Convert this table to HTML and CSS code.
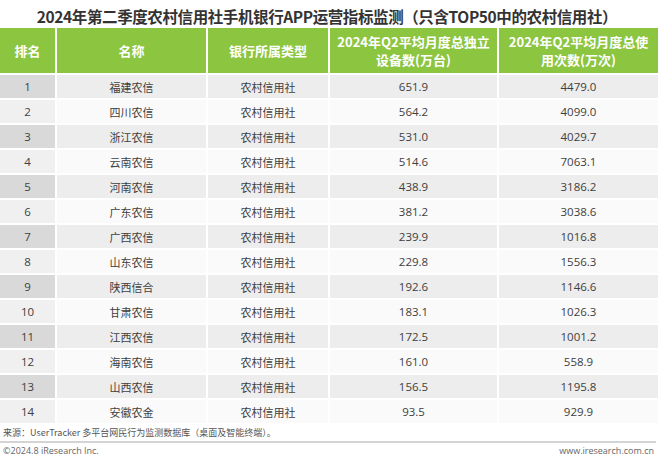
FILE: index.html
```html
<!DOCTYPE html>
<html lang="zh-CN">
<head>
<meta charset="utf-8">
<title>2024年第二季度农村信用社手机银行APP运营指标监测</title>
<link rel="stylesheet" href="styles.css">
</head>
<body>
<div class="page">
  <h1 class="title">2024年第二季度农村信用社手机银行APP运营指标监测（只含TOP50中的农村信用社）</h1>
  <div class="table">
    <div class="row head">
      <div class="cell">排名</div>
      <div class="cell">名称</div>
      <div class="cell">银行所属类型</div>
      <div class="cell">2024年Q2平均月度总独立<br>设备数(万台)</div>
      <div class="cell">2024年Q2平均月度总使<br>用次数(万次)</div>
    </div>
    <div class="row odd"><div class="cell rank">1</div><div class="cell">福建农信</div><div class="cell">农村信用社</div><div class="cell num">651.9</div><div class="cell num">4479.0</div></div>
    <div class="row even"><div class="cell rank">2</div><div class="cell">四川农信</div><div class="cell">农村信用社</div><div class="cell num">564.2</div><div class="cell num">4099.0</div></div>
    <div class="row odd"><div class="cell rank">3</div><div class="cell">浙江农信</div><div class="cell">农村信用社</div><div class="cell num">531.0</div><div class="cell num">4029.7</div></div>
    <div class="row even"><div class="cell rank">4</div><div class="cell">云南农信</div><div class="cell">农村信用社</div><div class="cell num">514.6</div><div class="cell num">7063.1</div></div>
    <div class="row odd"><div class="cell rank">5</div><div class="cell">河南农信</div><div class="cell">农村信用社</div><div class="cell num">438.9</div><div class="cell num">3186.2</div></div>
    <div class="row even"><div class="cell rank">6</div><div class="cell">广东农信</div><div class="cell">农村信用社</div><div class="cell num">381.2</div><div class="cell num">3038.6</div></div>
    <div class="row odd"><div class="cell rank">7</div><div class="cell">广西农信</div><div class="cell">农村信用社</div><div class="cell num">239.9</div><div class="cell num">1016.8</div></div>
    <div class="row even"><div class="cell rank">8</div><div class="cell">山东农信</div><div class="cell">农村信用社</div><div class="cell num">229.8</div><div class="cell num">1556.3</div></div>
    <div class="row odd"><div class="cell rank">9</div><div class="cell">陕西信合</div><div class="cell">农村信用社</div><div class="cell num">192.6</div><div class="cell num">1146.6</div></div>
    <div class="row even"><div class="cell rank">10</div><div class="cell">甘肃农信</div><div class="cell">农村信用社</div><div class="cell num">183.1</div><div class="cell num">1026.3</div></div>
    <div class="row odd"><div class="cell rank">11</div><div class="cell">江西农信</div><div class="cell">农村信用社</div><div class="cell num">172.5</div><div class="cell num">1001.2</div></div>
    <div class="row even"><div class="cell rank">12</div><div class="cell">海南农信</div><div class="cell">农村信用社</div><div class="cell num">161.0</div><div class="cell num">558.9</div></div>
    <div class="row odd"><div class="cell rank">13</div><div class="cell">山西农信</div><div class="cell">农村信用社</div><div class="cell num">156.5</div><div class="cell num">1195.8</div></div>
    <div class="row even"><div class="cell rank">14</div><div class="cell">安徽农金</div><div class="cell">农村信用社</div><div class="cell num">93.5</div><div class="cell num">929.9</div></div>
  </div>
  <p class="source">来源：UserTracker 多平台网民行为监测数据库（桌面及智能终端）。</p>
  <div class="footer">
    <span class="copy">©2024.8 iResearch Inc.</span>
    <span class="site">www.iresearch.com.cn</span>
  </div>
</div>
</body>
</html>
```

FILE: styles.css
```css
* { box-sizing: border-box; }
html, body { margin: 0; padding: 0; background: #ffffff; }
body {
  font-family: "Noto Sans", "Noto Sans CJK SC", sans-serif;
  color: #404040;
  width: 660px;
  height: 467px;
  overflow: hidden;
}
.page { padding-top: 5px; }
.title {
  margin: 0;
  height: 23px;
  font-size: 15.5px;
  line-height: 23px;
  font-weight: 700;
  color: #333333;
  text-align: center;
  font-family: "Noto Sans CJK SC", sans-serif;
  letter-spacing: -0.4px;
  padding-right: 6px;
}
.table {
  display: flex;
  flex-direction: column;
  gap: 2px;
  width: 658px;
}
.row {
  display: grid;
  grid-template-columns: 55px 149px 120px 167px 159px;
  column-gap: 2px;
  height: 23px;
}
.cell {
  display: flex;
  align-items: center;
  justify-content: center;
  text-align: center;
  font-size: 11px;
  font-family: "Noto Sans CJK SC", sans-serif;
}
.cell.num, .cell.rank {
  font-family: "Open Sans", "Noto Sans", sans-serif;
  font-size: 11.5px;
}
.head { height: 45px; }
.head .cell {
  background: #8cc540;
  color: #ffffff;
  font-weight: 700;
  font-size: 13px;
  line-height: 18px;
}
.odd .cell { background: #ededed; }
.odd .cell.rank { background: #d9d9d9; }
.even .cell { background: #fafafa; }
.even .cell.rank { background: #f0f0f0; }
.source {
  margin: 2px 0 0 3px;
  height: 16px;
  font-size: 9px;
  line-height: 16px;
  color: #555555;
  font-family: "Noto Sans CJK SC", sans-serif;
}
.footer {
  margin-top: 0;
  width: 656px;
  border-top: 2px solid #d4d4d4;
  display: flex;
  justify-content: space-between;
  padding: 1px 0 0 3px;
  font-family: "Open Sans", "Noto Sans", sans-serif;
  font-size: 9px;
  line-height: 14px;
  color: #666666;
}
.site { padding-right: 2px; }
```
